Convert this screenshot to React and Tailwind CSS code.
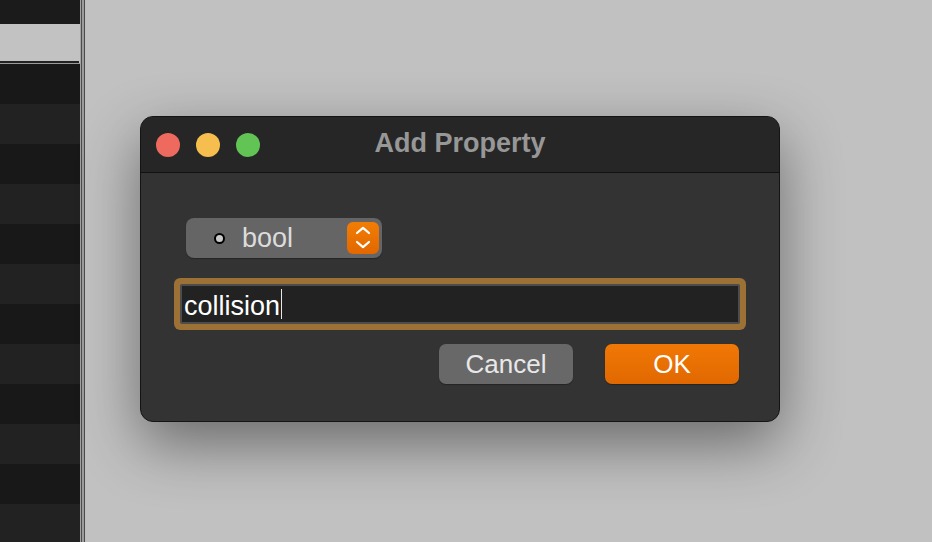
const rows = Array.from({ length: 12 }, (_, i) => i);

const Sidebar = () => (
  <div className="flex h-full">
    <div className="flex h-full w-[80px] flex-col overflow-hidden">
      <div className="h-[24px] shrink-0 bg-[#1b1b1b]" />
      <div className="h-[37px] shrink-0 bg-[#c2c2c2]" />
      <div className="h-[2px] shrink-0 bg-[#222] mr-px" />
      <div className="h-px shrink-0 bg-[#9a9a9a]" />
      {rows.map((i) => (
        <div
          key={i}
          className={i % 2 === 0 ? "h-[40px] shrink-0 bg-[#181818]" : "h-[40px] shrink-0 bg-[#222222]"}
        />
      ))}
    </div>
    <div className="w-px bg-[#a3a3a3]" />
    <div className="w-px bg-[#4d4d4d]" />
    <div className="w-[2px] bg-[#9c9c9c]" />
    <div className="w-px bg-[#4a4a4a]" />
  </div>
);

const Stepper = () => (
  <div className="flex h-[32px] w-[32px] items-center justify-center rounded-[6px] bg-gradient-to-b from-[#f27d05] to-[#e26700]">
    <svg width="32" height="32" viewBox="0 0 32 32" fill="none" stroke="#fff" strokeWidth="2.2" strokeLinecap="round" strokeLinejoin="round">
      <path d="M10 11 L16 5.8 L22 11" />
      <path d="M10 20 L16 25.2 L22 20" />
    </svg>
  </div>
);

const App = () => {
  return (
    <div className="flex h-[542px] w-[932px] overflow-hidden bg-[#c1c1c1] font-['Liberation_Sans',Arial,sans-serif]">
      <Sidebar />
      <div className="flex-1 pl-[55px] pt-[116px]">
        <div className="flex h-[306px] w-[640px] flex-col overflow-hidden rounded-[13px] border border-[#141414] bg-[#333333] shadow-[0_22px_60px_rgba(0,0,0,0.45)]">
          {/* title bar */}
          <div className="grid h-[56px] shrink-0 grid-cols-[1fr_auto_1fr] items-center border-b border-[#111] bg-[#262626] px-[15px]">
            <div className="flex gap-[16px]">
              <div className="h-[24px] w-[24px] rounded-full bg-[#ee6a5e]" />
              <div className="h-[24px] w-[24px] rounded-full bg-[#f5be4f]" />
              <div className="h-[24px] w-[24px] rounded-full bg-[#61c454]" />
            </div>
            <div className="-mt-[3px] text-[27px] font-bold leading-none text-[#979797]">Add Property</div>
            <div />
          </div>

          {/* body */}
          <div className="flex flex-1 flex-col">
            <div className="ml-[45px] mt-[45px] flex h-[40px] w-[196px] items-center rounded-[8px] bg-[#656565] pl-[28px] pr-[3px] shadow-[0_1px_1px_rgba(0,0,0,0.3)]">
              <div className="h-[11px] w-[11px] rounded-full border-2 border-black bg-[#c9c9c9]" />
              <span className="ml-[17px] flex-1 text-[27px] leading-none text-[#dcdcdc]">bool</span>
              <Stepper />
            </div>

            <div className="ml-[39px] mt-[26px] flex h-[40px] w-[560px] items-center rounded-[2px] border-2 border-[#4c4c4c] bg-[#222222] pl-[2px] shadow-[0_0_0_6px_#9b7135]">
              <span className="mt-[4px] text-[27px] leading-none text-white">collision</span>
              <span className="ml-px h-[30px] w-px bg-[#e8e8e8]" />
            </div>

            <div className="mr-[40px] mt-[20px] flex justify-end gap-[32px]">
              <button className="flex h-[40px] w-[134px] items-center justify-center rounded-[7px] bg-[#686868] text-[26px] leading-none text-[#e8e8e8] shadow-[0_1px_1px_rgba(0,0,0,0.3)]">
                Cancel
              </button>
              <button className="flex h-[40px] w-[134px] items-center justify-center rounded-[7px] bg-gradient-to-b from-[#f17806] to-[#e06800] text-[26px] leading-none text-white shadow-[0_1px_1px_rgba(0,0,0,0.3)]">
                OK
              </button>
            </div>
          </div>
        </div>
      </div>
    </div>
  );
};

export default App;
